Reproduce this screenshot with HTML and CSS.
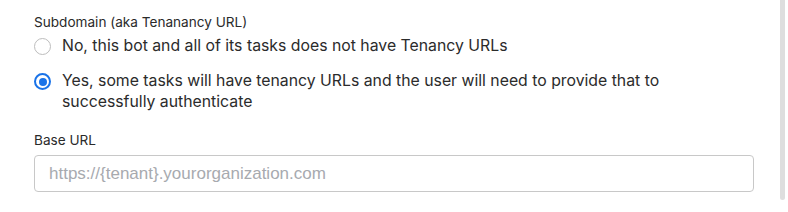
FILE: index.html
```html
<!DOCTYPE html>
<html>
<head>
<meta charset="utf-8">
<link rel="stylesheet" href="styles.css">
</head>
<body>
<div class="page">
  <div class="form">
    <div class="field">
      <div class="label">Subdomain (aka Tenanancy URL)</div>
      <div class="options">
        <label class="option">
          <span class="radio"></span>
          <span class="option-text">No, this bot and all of its tasks does not have Tenancy URLs</span>
        </label>
        <label class="option">
          <span class="radio checked"></span>
          <span class="option-text">Yes, some tasks will have tenancy URLs and the user will need to provide that to successfully authenticate</span>
        </label>
      </div>
    </div>
    <div class="field field-url">
      <div class="label">Base URL</div>
      <div class="input"><span class="placeholder">https://{tenant}.yourorganization.com</span></div>
    </div>
  </div>
  <div class="scrollbar"><div class="thumb"></div></div>
</div>
</body>
</html>
```
FILE: styles.css
```css
html, body {
  margin: 0;
  padding: 0;
  background: #ffffff;
}
body {
  font-family: Inter, "Noto Sans", sans-serif;
  color: #2b2b2b;
}
.page {
  display: flex;
  width: 788px;
  height: 212px;
}
.form {
  width: 720px;
  padding-left: 34px;
  padding-top: 13px;
}
.label {
  font-size: 13.6px;
  line-height: 18px;
  color: #2a2a2a;
}
.options {
  display: flex;
  flex-direction: column;
  gap: 14px;
  margin-top: 4px;
}
.option {
  display: flex;
  align-items: flex-start;
  gap: 11px;
}
.radio {
  flex: none;
  width: 15px;
  height: 15px;
  border: 1px solid #bdbdbd;
  border-radius: 50%;
  margin-top: 3px;
  box-sizing: content-box;
  position: relative;
}
.radio.checked {
  border: 2px solid #1a73e8;
  width: 13px;
  height: 13px;
}
.radio.checked::after {
  content: "";
  position: absolute;
  left: 2.5px;
  top: 2.5px;
  width: 8px;
  height: 8px;
  border-radius: 50%;
  background: #1a73e8;
}
.option-text {
  font-size: 15.8px;
  line-height: 21px;
  color: #2b2b2b;
}
.field-url {
  margin-top: 19px;
}
.input {
  margin-top: 6px;
  height: 35px;
  border: 1px solid #c8c8c8;
  border-radius: 4px;
  display: flex;
  align-items: center;
  padding-left: 14px;
}
.placeholder {
  font-family: "Liberation Sans", Arial, sans-serif;
  font-size: 17px;
  color: #a7aaaf;
}
.scrollbar {
  margin-left: 26px;
  width: 5px;
}
.thumb {
  width: 5px;
  height: 200px;
  background: #dedede;
  border-radius: 0 0 3px 3px;
}
```
